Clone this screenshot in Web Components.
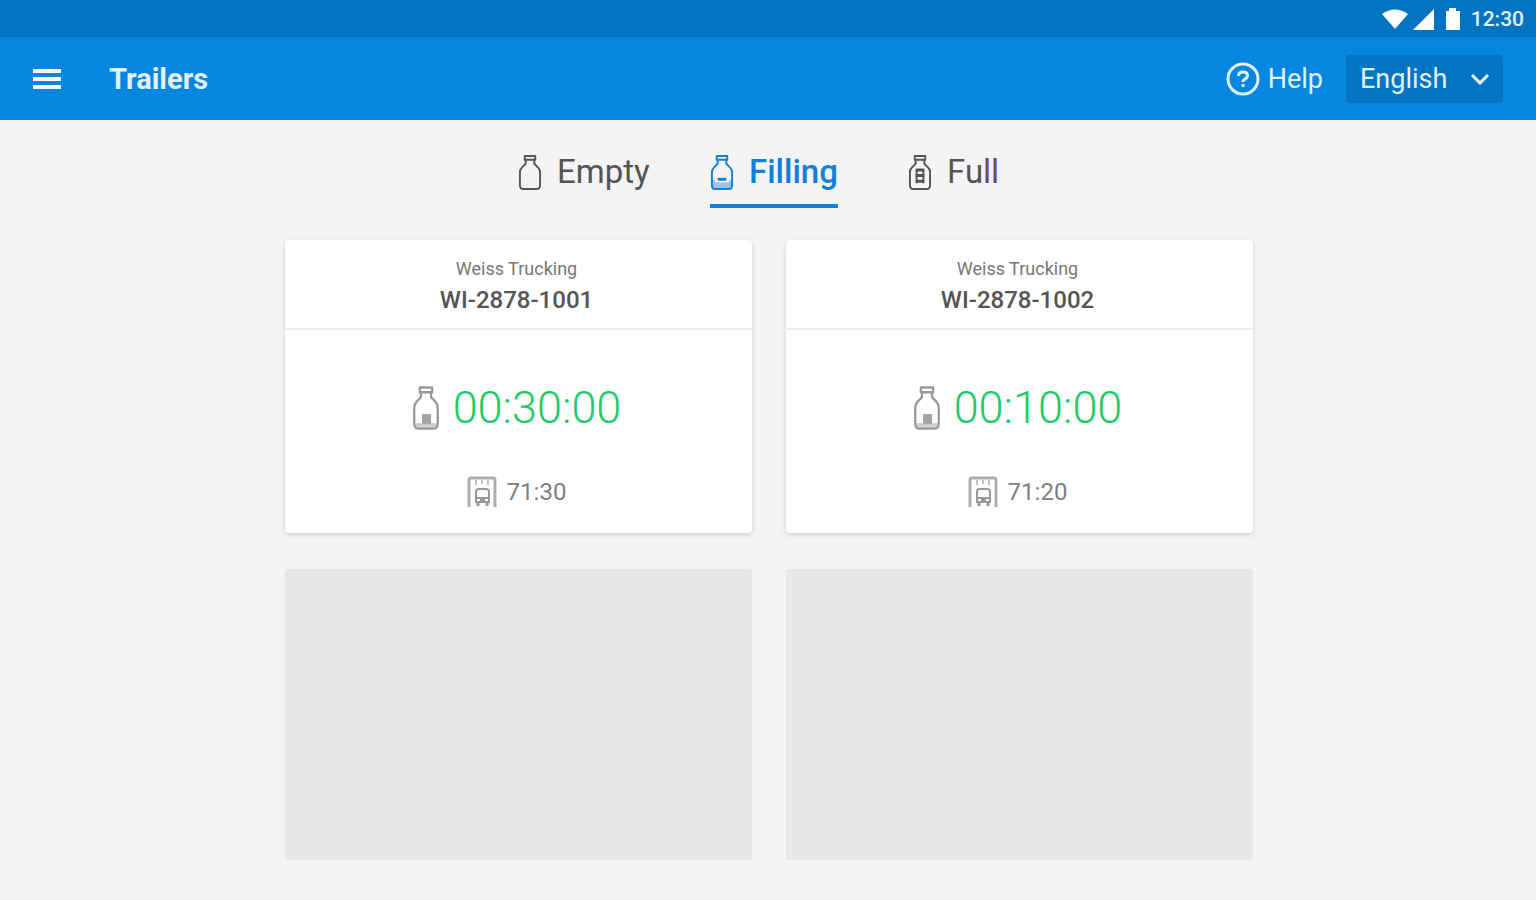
<!DOCTYPE html>
<html lang="en">
<head>
<meta charset="utf-8">
<meta name="viewport" content="width=device-width, initial-scale=1">
<title>Trailers</title>
<style>
    body {
        margin: 0;
        min-height: 100vh;
        background: #f4f4f4;
        font-family: Roboto, "Liberation Sans", sans-serif;
        color: #555;
    }
    main {
        max-width: 968px;
        margin: 0 auto;
        padding: 32px 16px 32px 18px;
    }
    .grid {
        display: grid;
        grid-template-columns: 1fr 1fr;
        gap: 36px 34px;
        margin-top: 32px;
    }
</style>
</head>
<body>
    <status-bar>12:30</status-bar>
    <app-toolbar>
        Trailers
        <help-link slot="actions" href="#help">Help</help-link>
        <language-select slot="actions"></language-select>
    </app-toolbar>
    <main>
        <tab-bar>
            <tab-item level="empty">Empty</tab-item>
            <tab-item level="filling" active>Filling</tab-item>
            <tab-item level="full">Full</tab-item>
        </tab-bar>
        <div class="grid">
            <trailer-card time="00:30:00" dock="71:30">
                <span slot="company">Weiss Trucking</span>
                WI-2878-1001
            </trailer-card>
            <trailer-card time="00:10:00" dock="71:20">
                <span slot="company">Weiss Trucking</span>
                WI-2878-1002
            </trailer-card>
            <empty-bay></empty-bay>
            <empty-bay></empty-bay>
        </div>
    </main>

<script>
// Android style bar with the signal icons and the clock
class StatusBar extends HTMLElement {
    constructor() {
        super();
        this.attachShadow({ mode: 'open' });
    }

    connectedCallback() {
        this.shadowRoot.innerHTML = `
            <style>
                :host {
                    display: flex;
                    align-items: center;
                    justify-content: flex-end;
                    height: 37px;
                    padding: 0 12px;
                    background: #0274c1;
                    color: #e3f1fc;
                    font-size: 21px;
                    font-weight: 500;
                }
                svg { display: block; fill: #fff; margin-right: 10px; }
            </style>
            <svg width="80" height="24" viewBox="0 0 80 24" aria-hidden="true">
                <path d="M1 7 Q14 -2 27 7 L14 22 Z"/>
                <path d="M53 2 V23 H32 Z"/>
                <path d="M65 4 H68 V1 H75 V4 H79 V23 H65 Z"/>
            </svg>
            <slot></slot>
        `;
    }
}
customElements.define('status-bar', StatusBar);

class AppToolbar extends HTMLElement {
    constructor() {
        super();
        this.attachShadow({ mode: 'open' });
    }

    connectedCallback() {
        this.shadowRoot.innerHTML = `
            <style>
                :host { display: block; }
                header {
                    display: flex;
                    align-items: center;
                    box-sizing: border-box;
                    height: 83px;
                    padding: 0 33px;
                    background: #0587e0;
                    color: #e3f1fc;
                }
                button {
                    display: block;
                    padding: 0;
                    border: 0;
                    background: none;
                    cursor: pointer;
                }
                svg { display: block; }
                h1 {
                    flex: 1;
                    margin: 0 0 0 48px;
                    font-size: 29px;
                    font-weight: 700;
                }
                .actions { display: flex; align-items: center; gap: 23px; }
            </style>
            <header>
                <button type="button" aria-label="Menu">
                    <svg width="28" height="24" viewBox="0 0 28 24" fill="#f2f8fe">
                        <rect y="2" width="28" height="4"/>
                        <rect y="10" width="28" height="4"/>
                        <rect y="18" width="28" height="4"/>
                    </svg>
                </button>
                <h1><slot></slot></h1>
                <div class="actions"><slot name="actions"></slot></div>
            </header>
        `;
    }
}
customElements.define('app-toolbar', AppToolbar);

class HelpLink extends HTMLElement {
    constructor() {
        super();
        this.attachShadow({ mode: 'open' });
    }

    connectedCallback() {
        this.shadowRoot.innerHTML = `
            <style>
                :host { display: block; }
                a {
                    display: flex;
                    align-items: center;
                    gap: 8px;
                    color: inherit;
                    font-size: 27px;
                    text-decoration: none;
                }
                svg { display: block; }
            </style>
            <a href="${this.getAttribute('href')}">
                <svg width="34" height="34" viewBox="0 0 34 34" fill="none" stroke="#e3f1fc" stroke-width="3" aria-hidden="true">
                    <circle cx="17" cy="17" r="15"/>
                    <path d="M12.5 14 Q12.500 10 17 10 Q21.500 10 21.500 13.500 Q21.500 16 19 17 Q17 18 17 20"/>
                    <path d="M17 22 V25"/>
                </svg>
                <slot></slot>
            </a>
        `;
    }
}
customElements.define('help-link', HelpLink);

class LanguageSelect extends HTMLElement {
    constructor() {
        super();
        this.attachShadow({ mode: 'open' });
    }

    connectedCallback() {
        this.shadowRoot.innerHTML = `
            <style>
                :host { display: block; }
                label { display: grid; align-items: center; }
                select, svg { grid-area: 1 / 1; }
                select {
                    appearance: none;
                    width: 157px;
                    height: 48px;
                    padding: 0 14px;
                    border: 0;
                    border-radius: 4px;
                    background: #0274c1;
                    color: inherit;
                    font: inherit;
                    font-size: 27px;
                }
                svg { justify-self: end; margin-right: 14px; pointer-events: none; }
            </style>
            <label>
                <select aria-label="Language">
                    <option>English</option>
                    <option>Deutsch</option>
                </select>
                <svg width="18" height="12" viewBox="0 0 18 12" fill="none" stroke="#f2f8fe" stroke-width="3" aria-hidden="true">
                    <path d="M1 2 L9 10 L17 2"/>
                </svg>
            </label>
        `;
    }
}
customElements.define('language-select', LanguageSelect);

// Bottle drawn in the current colour, level: empty, filling, full or dock (the one in the cards)
class BottleIcon extends HTMLElement {
    constructor() {
        super();
        this.attachShadow({ mode: 'open' });
    }

    connectedCallback() {
        const levels = {
            empty: '',
            filling: '<path d="M8 26 H17" stroke-width="3"/><path d="M3 27 V32 Q3 35 6 35 H19 Q22 35 22 32 V27 M4 31 H21" stroke-width="4" opacity=".4"/>',
            full: '<path d="M8 16.500 H17 M8 22 H17 M8 28 H17" stroke-width="3"/><path d="M9 17 V30 M16 17 V30"/>',
            dock: '<path d="M9 24 H17 V32 H9 Z" fill="currentColor" stroke="none" opacity=".9"/><path d="M3 33 H22" stroke-width="3" opacity=".5"/>'
        };
        this.shadowRoot.innerHTML = `
            <style>
                :host { display: block; width: 24px; height: 37px; }
                svg { display: block; width: 100%; height: 100%; }
            </style>
            <svg viewBox="0 0 25 38" preserveAspectRatio="none" fill="none" stroke="currentColor" stroke-width="2" stroke-linejoin="round" aria-hidden="true">
                <path d="M7 2 H18 V6 H7 Z"/>
                <path d="M8 6 V10 L4 14 Q2 16 2 19 V32 Q2 36 6 36 H19 Q23 36 23 32 V19 Q23 16 21 14 L17 10 V6"/>
                ${levels[this.getAttribute('level')]}
            </svg>
        `;
    }
}
customElements.define('bottle-icon', BottleIcon);

class TabBar extends HTMLElement {
    constructor() {
        super();
        this.attachShadow({ mode: 'open' });
    }

    connectedCallback() {
        this.shadowRoot.innerHTML = `
            <style>
                :host { display: block; }
                nav {
                    display: grid;
                    grid-template-columns: 192px 198px 112px;
                    justify-content: center;
                    justify-items: start;
                }
            </style>
            <nav><slot></slot></nav>
        `;
    }
}
customElements.define('tab-bar', TabBar);

class TabItem extends HTMLElement {
    constructor() {
        super();
        this.attachShadow({ mode: 'open' });
    }

    connectedCallback() {
        this.shadowRoot.innerHTML = `
            <style>
                :host { display: block; color: #555; }
                :host([active]) { color: #1180da; }
                button {
                    display: flex;
                    align-items: center;
                    gap: 15px;
                    box-sizing: border-box;
                    height: 56px;
                    padding: 0 0 12px;
                    border: 0;
                    border-bottom: 4px solid transparent;
                    background: none;
                    color: inherit;
                    font: inherit;
                    font-size: 33px;
                    line-height: 40px;
                    cursor: pointer;
                }
                :host([active]) button { border-color: #1180da; font-weight: 500; }
            </style>
            <button type="button">
                <bottle-icon level="${this.getAttribute('level')}"></bottle-icon>
                <slot></slot>
            </button>
        `;
    }
}
customElements.define('tab-item', TabItem);

class TrailerCard extends HTMLElement {
    constructor() {
        super();
        this.attachShadow({ mode: 'open' });
    }

    connectedCallback() {
        this.shadowRoot.innerHTML = `
            <style>
                :host {
                    display: block;
                    border-radius: 4px;
                    background: #fff;
                    box-shadow: 0 2px 5px rgba(0, 0, 0, .14);
                    text-align: center;
                }
                header {
                    padding: 17px 4px 9px 0;
                    border-bottom: 2px solid #eee;
                    font-size: 24px;
                    font-weight: 500;
                    line-height: 38px;
                    color: #555;
                }
                .company { font-size: 18px; font-weight: 400; line-height: 24px; color: #777; }
                .row {
                    display: flex;
                    align-items: center;
                    justify-content: center;
                    padding-right: 4px;
                    color: #999;
                }
                .time { gap: 13px; padding-top: 50px; line-height: 56px; }
                time { font-size: 45px; font-weight: 300; color: #1fca67; }
                .dock { gap: 10px; padding-top: 39px; padding-bottom: 24px; font-size: 24px; line-height: 34px; }
                .dock span { color: #808080; }
                bottle-icon { width: 28px; height: 46px; }
                svg { display: block; }
            </style>
            <header>
                <div class="company"><slot name="company"></slot></div>
                <slot></slot>
            </header>
            <div class="row time">
                <bottle-icon level="dock"></bottle-icon>
                <time>${this.getAttribute('time')}</time>
            </div>
            <div class="row dock">
                <svg width="30" height="32" viewBox="0 0 30 32" fill="none" stroke="currentColor" stroke-width="2" aria-hidden="true">
                    <path d="M2 31 V4 Q2 2 4 2 H26 Q28 2 28 4 V31" stroke-width="3" opacity=".8"/>
                    <path d="M9 4 V9 M15 4 V8 M21 4 V9" opacity=".6"/>
                    <path d="M9 16 Q9 13 12 13 H19 Q22 13 22 16 V26 H9 Z M9 22 H22"/>
                    <path d="M11 26 V30 M20 26 V30 M13 24 H18" stroke-width="3"/>
                </svg>
                <span>${this.getAttribute('dock')}</span>
            </div>
        `;
    }
}
customElements.define('trailer-card', TrailerCard);

// Placeholder for a bay with no trailer in it
class EmptyBay extends HTMLElement {
    constructor() {
        super();
        this.attachShadow({ mode: 'open' });
    }

    connectedCallback() {
        this.shadowRoot.innerHTML = `
            <style>
                :host {
                    display: block;
                    min-height: 291px;
                    border-radius: 3px;
                    background: #e7e7e7;
                }
            </style>
        `;
    }
}
customElements.define('empty-bay', EmptyBay);
</script>
</body>
</html>
